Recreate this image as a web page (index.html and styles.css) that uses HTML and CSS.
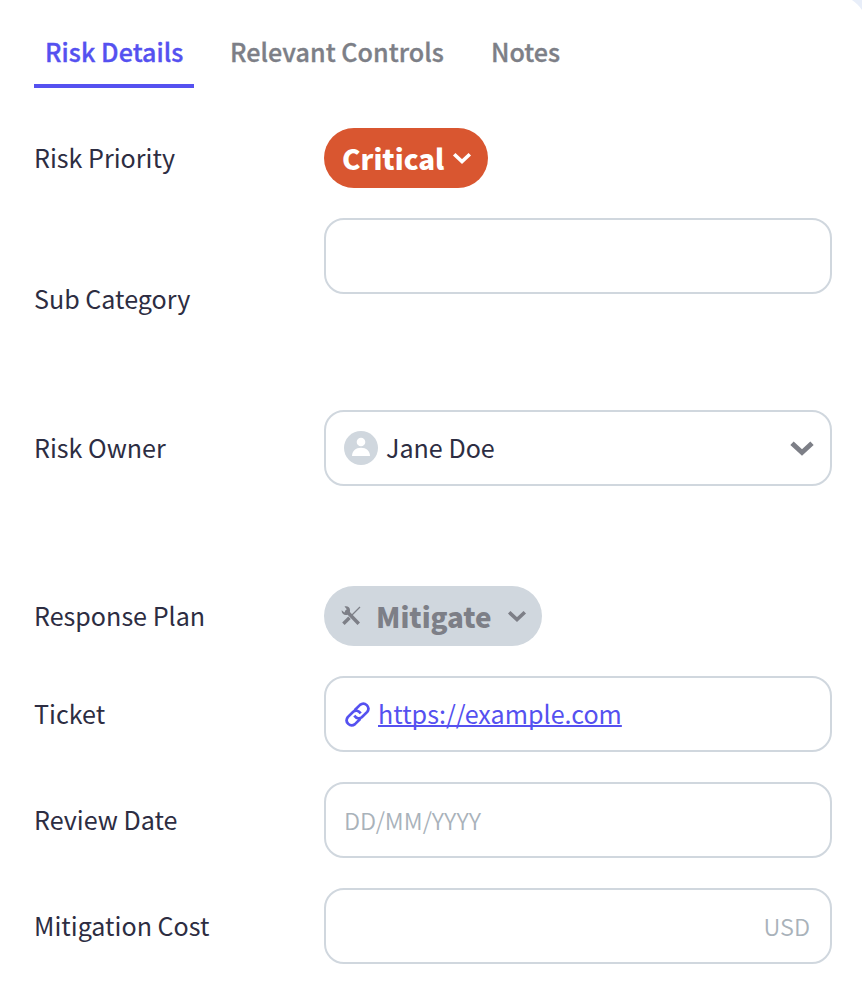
FILE: index.html
```html
<!DOCTYPE html>
<html lang="en">
<head>
<meta charset="utf-8">
<title>Risk Details</title>
<link rel="stylesheet" href="styles.css">
</head>
<body>
<main class="panel">
  <nav class="tabs">
    <a class="tab tab-active">Risk Details</a>
    <a class="tab">Relevant Controls</a>
    <a class="tab">Notes</a>
  </nav>
  <section class="rows">
    <div class="row row-pill">
      <span class="label">Risk Priority</span>
      <button class="pill pill-critical"><span>Critical</span>
        <svg class="chev" width="20" height="14" viewBox="0 0 20 14"><path d="M2.200 3.300 10 10.600 17.800 3.300" fill="none" stroke="currentColor" stroke-width="3.600"/></svg>
      </button>
    </div>
    <div class="row row-tall">
      <span class="label">Sub Category</span>
      <div class="field"></div>
    </div>
    <div class="row row-owner">
      <span class="label">Risk Owner</span>
      <div class="field">
        <svg class="avatar" width="34" height="34" viewBox="0 0 34 34"><circle cx="17" cy="17" r="17" fill="#d0d7de"/><circle cx="17" cy="11" r="4.300" fill="#fff"/><path d="M8 25c0-5 3.700-8.300 9-8.300s9 3.300 9 8.300z" fill="#fff"/></svg>
        <span class="value">Jane Doe</span>
        <svg class="select-chev" width="24" height="16" viewBox="0 0 24 16"><path d="M2 3.200 12 12.500 22 3.200" fill="none" stroke="currentColor" stroke-width="4.900"/></svg>
      </div>
    </div>
    <div class="row row-pill">
      <span class="label">Response Plan</span>
      <button class="pill pill-mitigate">
        <svg class="tools" width="20" height="20" viewBox="0 0 20 20"><path d="M1.300 1.800 4.300 4.500 5.800 3.200 3.500.6C6.300-.4 9.500 1.600 9 5L8.900 6.100 19 16.400 16.500 18.900 6.600 8.700C3.500 10.200.2 7.300.7 4.200L3.500 6.600 4.300 4.500z" fill="currentColor"/><path d="M2.400 17.700 8.500 11.700" stroke="currentColor" stroke-width="3.500"/><path d="M10 10 19 1" stroke="currentColor" stroke-width="1.300"/></svg>
        <span>Mitigate</span>
        <svg class="chev" width="20" height="14" viewBox="0 0 20 14"><path d="M2.200 3.300 10 10.600 17.800 3.300" fill="none" stroke="currentColor" stroke-width="3.600"/></svg>
      </button>
    </div>
    <div class="row">
      <span class="label">Ticket</span>
      <div class="field">
        <svg class="link-icon" width="25" height="25" viewBox="0 0 25 25"><g fill="none" stroke="currentColor" stroke-width="2.700"><path d="M9.600 8.200 15 2.900C19.800-.9 25.800 5 22.200 9.900L16.800 15.200C14.400 17.200 11.500 16.500 9.300 13.600"/><path d="M15.400 16.800 10 22.100C5.200 25.900-.8 20 2.800 15.100L8.200 9.800C10.600 7.800 13.500 8.500 15.700 11.400"/></g></svg>
        <a class="url">https://example.com</a>
      </div>
    </div>
    <div class="row">
      <span class="label">Review Date</span>
      <div class="field"><span class="hint">DD/MM/YYYY</span></div>
    </div>
    <div class="row">
      <span class="label">Mitigation Cost</span>
      <div class="field field-end"><span class="hint">USD</span></div>
    </div>
  </section>
</main>
</body>
</html>
```
FILE: styles.css
```css
* { box-sizing: border-box; }
body {
  margin: 0;
  background: #e8eef9;
  font-family: "Noto Sans CJK SC", "Noto Sans", sans-serif;
  font-size: 25.1px;
  line-height: 36px;
  color: #2d2d42;
  overflow: hidden;
}
.panel {
  height: 1012px;
  margin: -6px -6px 0 0;
  padding: 24px 36px 0 34px;
  background: #fff;
  border-top-right-radius: 36px;
}
.tabs { display: flex; gap: 25px; }
.tab {
  height: 70px;
  padding: 15px 11px 0;
  font-weight: 500;
  letter-spacing: 0.05px;
  -webkit-text-stroke: 0.35px currentColor;
  color: #7d7f87;
  white-space: nowrap;
}
.tab-active { width: 160px; color: #5551f0; border-bottom: 4px solid #5551f0; }
.rows { display: flex; flex-direction: column; gap: 30px; padding-top: 40px; }
.row { display: grid; grid-template-columns: 290px 508px; height: 76px; }
.row-pill { height: 60px; }
.row-tall { height: 162px; }
.row-owner { margin-bottom: 70px; }
.label { align-self: center; padding-bottom: 2px; }
.field {
  display: flex;
  align-items: center;
  height: 76px;
  padding: 0 18px;
  border: 2px solid #d0d7de;
  border-radius: 20px;
}
.field-end { justify-content: flex-end; padding-right: 20px; }
.avatar { margin-right: 8px; }
.value, .url { padding-bottom: 2px; }
.select-chev { margin-left: auto; margin-right: -2px; color: #7d7f87; }
.pill {
  display: flex;
  align-items: center;
  justify-self: start;
  height: 60px;
  border: 0;
  border-radius: 30px;
  font: inherit;
  font-size: 27.8px;
  font-weight: 900;
}
.pill-critical { width: 164px; padding: 0 16px 0 18px; gap: 6px; background: #d95630; color: #fff; }
.pill-mitigate { width: 218px; padding: 0 16px 0 17px; gap: 15px; background: #d0d7de; color: #7d7f87; }
.tools { flex: none; }
.chev { flex: none; margin-left: auto; }
.link-icon { margin: 0 8px 0 1px; color: #5551f0; }
.url { color: #5551f0; text-decoration: underline; text-decoration-thickness: 2px; text-underline-offset: 1px; text-decoration-skip-ink: none; }
.hint { font-size: 23.5px; font-weight: 350; color: #a9b2ba; }
```
